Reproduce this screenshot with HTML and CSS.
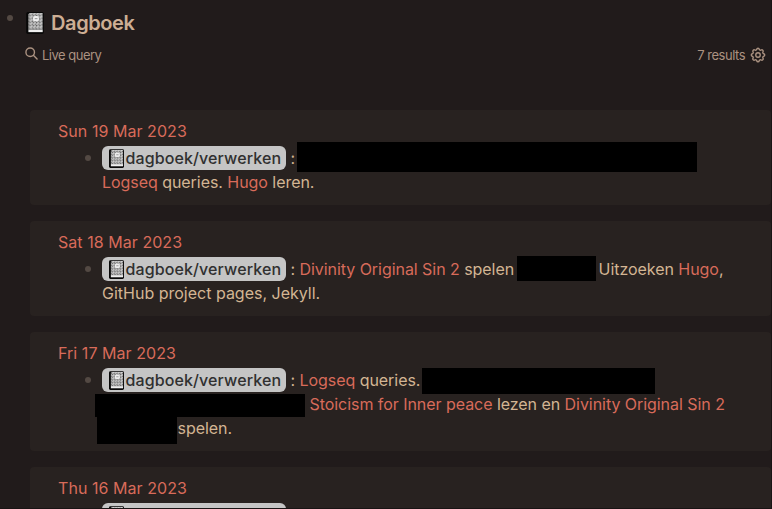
FILE: index.html
```html
<!DOCTYPE html>
<html lang="nl">
<head>
<meta charset="utf-8">
<title>Dagboek</title>
<link rel="stylesheet" href="styles.css">
</head>
<body>
<svg class="defs" width="0" height="0">
  <defs>
    <pattern id="speckle" width="3" height="3" patternUnits="userSpaceOnUse">
      <rect width="3" height="3" fill="#b4b4b4"/>
      <rect width="1" height="1" fill="#555"/>
      <rect x="1" y="1" width="1" height="1" fill="#ddd"/>
      <rect x="2" y="2" width="1" height="1" fill="#666"/>
    </pattern>
    <symbol id="notebook" viewBox="0 0 16 20">
      <rect width="16" height="20" rx="1.5" fill="#080808"/>
      <path d="M3 1h12v15H2V2z" fill="url(#speckle)"/>
      <path d="M2 16h13v2.3H2z" fill="#eee"/>
      <rect x="6.2" y="3.7" width="5.4" height="4.8" rx="2" fill="#eee"/>
      <path d="M7.8 6h2.4" stroke="#999"/>
    </symbol>
  </defs>
</svg>
<main class="page">
  <header class="heading">
    <span class="bullet"></span>
    <svg class="book"><use href="#notebook"/></svg>
    <h1>Dagboek</h1>
  </header>
  <div class="toolbar">
    <svg class="search" viewBox="0 0 14 14"><circle cx="5.6" cy="5.6" r="4.6"/><path d="M9 9l4 4"/></svg>
    <span>Live query</span>
    <span class="count">7 results</span>
    <svg class="gear" viewBox="0 0 24 24"><path d="M10.325 4.317c.426-1.756 2.924-1.756 3.35 0a1.724 1.724 0 0 0 2.573 1.066c1.543-.94 3.31.826 2.37 2.37a1.724 1.724 0 0 0 1.065 2.572c1.756.426 1.756 2.924 0 3.35a1.724 1.724 0 0 0-1.066 2.573c.94 1.543-.826 3.31-2.37 2.37a1.724 1.724 0 0 0-2.572 1.065c-.426 1.756-2.924 1.756-3.35 0a1.724 1.724 0 0 0-2.573-1.066c-1.543.94-3.31-.826-2.37-2.37a1.724 1.724 0 0 0-1.065-2.572c-1.756-.426-1.756-2.924 0-3.35a1.724 1.724 0 0 0 1.066-2.573c-.94-1.543.826-3.31 2.37-2.37 1 .608 2.296.07 2.572-1.065z"/><circle cx="12" cy="12" r="3"/></svg>
  </div>
  <section class="results">
    <article class="card">
      <h2>Sun 19 Mar 2023</h2>
      <div class="block">
        <span class="bullet"></span>
        <div class="text">
          <div class="line"><span class="tag"><svg class="book"><use href="#notebook"/></svg>dagboek/verwerken</span><span> :</span><i class="hidden h1a"></i></div>
          <div class="line"><a>Logseq</a><span> queries. </span><a>Hugo</a><span> leren.</span></div>
        </div>
      </div>
    </article>
    <article class="card">
      <h2>Sat 18 Mar 2023</h2>
      <div class="block">
        <span class="bullet"></span>
        <div class="text">
          <div class="line"><span class="tag"><svg class="book"><use href="#notebook"/></svg>dagboek/verwerken</span><span> : </span><a>Divinity Original Sin 2</a><span> spelen</span><i class="hidden h2a"></i><span>Uitzoeken </span><a>Hugo</a><span>,</span></div>
          <div class="line loose"><span>GitHub project pages, Jekyll.</span></div>
        </div>
      </div>
    </article>
    <article class="card">
      <h2>Fri 17 Mar 2023</h2>
      <div class="block">
        <span class="bullet"></span>
        <div class="text">
          <div class="line"><span class="tag"><svg class="book"><use href="#notebook"/></svg>dagboek/verwerken</span><span> : </span><a>Logseq</a><span> queries.</span><i class="hidden h3a"></i></div>
          <div class="line"><i class="hidden h3b"></i><a>Stoicism for Inner peace</a><span> lezen en </span><a>Divinity Original Sin 2</a></div>
          <div class="line"><i class="hidden h3c"></i><span>spelen.</span></div>
        </div>
      </div>
    </article>
    <article class="card">
      <h2>Thu 16 Mar 2023</h2>
      <div class="block">
        <span class="bullet"></span>
        <div class="text">
          <div class="line"><span class="tag"><svg class="book"><use href="#notebook"/></svg>dagboek/verwerken</span></div>
        </div>
      </div>
    </article>
  </section>
</main>
</body>
</html>
```
FILE: styles.css
```css
* { box-sizing: border-box; }
body {
  margin: 0;
  background: #211b1b;
  color: #d3b593;
  font: 16px/24px Inter, sans-serif;
}
.defs { display: block; }
.page {
  height: 509px;
  overflow: hidden;
  border-right: 1px solid #191414;
  border-bottom: 1px solid #191414;
}
h1, h2 { margin: 0; }
.bullet {
  flex: none;
  width: 6px;
  height: 6px;
  border-radius: 50%;
  background: #534943;
}
.heading {
  display: flex;
  height: 46px;
  padding: 8px 0 0 7px;
}
.heading .bullet { margin-top: 7px; }
.heading .book {
  width: 18px;
  height: 22px;
  margin: 4px 7px 0 13px;
}
h1 {
  font-size: 20px;
  line-height: 30px;
  font-weight: 600;
  letter-spacing: -0.4px;
  color: #cdae94;
}
.toolbar {
  display: flex;
  height: 18px;
  padding: 0 4px 0 25px;
  font-size: 13px;
  line-height: 18px;
  letter-spacing: -0.5px;
  color: #ab9281;
}
.search, .gear { fill: none; stroke: #ab9281; stroke-linecap: round; stroke-linejoin: round; }
.search { width: 13px; height: 13px; margin: 1px 4px 0 0; stroke-width: 1.5; }
.count { margin-left: auto; }
.gear { width: 18px; height: 18px; margin-left: 4px; stroke-width: 1.8; }
.results {
  display: flex;
  flex-direction: column;
  gap: 16px;
  padding: 46px 0 0 30px;
}
.card {
  padding: 9px 0 11px 28px;
  background: #282220;
  border-radius: 4px;
}
h2 {
  font-size: 16px;
  line-height: 24px;
  font-weight: 400;
  letter-spacing: 0.05px;
  color: #d86b5a;
}
.block { display: flex; padding: 3px 0 0 27px; }
.block .bullet { margin: 9px 11px 0 0; }
.line { display: flex; height: 24px; white-space: pre; letter-spacing: -0.05px; }
.loose { letter-spacing: 0; }
a { color: #d86b5a; }
.tag {
  display: flex;
  width: 184px;
  height: 24px;
  padding-left: 7px;
  border-radius: 6px;
  background: #c5c5c5;
  color: #303030;
  font-weight: 500;
  letter-spacing: 0.11px;
}
.tag .book { width: 15px; height: 19px; margin: 3px 1.5px 0 0; }
.hidden { flex: none; background: #000; }
.h1a { width: 400px; height: 30px; margin: -4px 0 0 2px; }
.h2a { width: 79px; height: 25px; margin: -1px 2.5px 0 3px; }
.h3a { width: 233px; height: 26px; margin-left: 2px; }
.h3b { width: 210px; height: 23px; margin: 2px 4.5px 0 -7px; }
.h3c { width: 80px; height: 27px; margin: 1px 0.5px 0 -5px; }
```
